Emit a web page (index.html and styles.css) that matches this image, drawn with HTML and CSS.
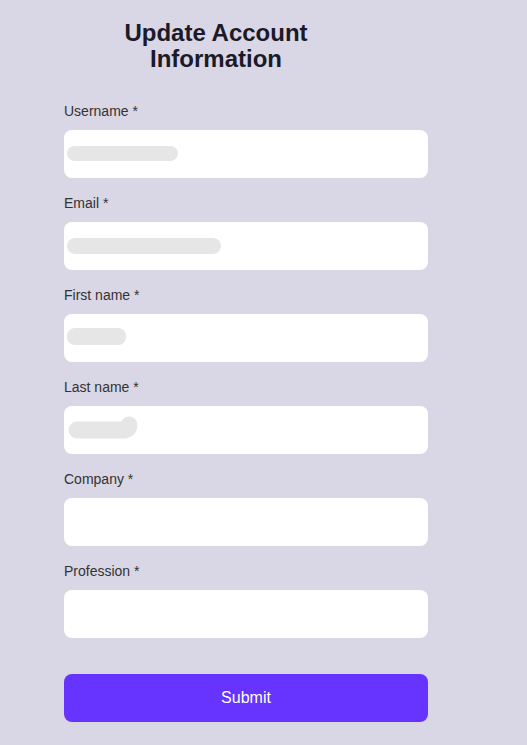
FILE: index.html
```html
<!DOCTYPE html>
<html>
<head>
<meta charset="utf-8">
<link rel="stylesheet" href="styles.css">
</head>
<body>
<div class="page">
  <h1 class="title">Update Account Information</h1>
  <form class="form">
    <div class="field">
      <label class="label">Username *</label>
      <div class="input"><span class="blob blob-user"></span></div>
    </div>
    <div class="field">
      <label class="label">Email *</label>
      <div class="input"><span class="blob blob-email"></span></div>
    </div>
    <div class="field">
      <label class="label">First name *</label>
      <div class="input"><span class="blob blob-first"></span></div>
    </div>
    <div class="field">
      <label class="label">Last name *</label>
      <div class="input">
        <svg class="scribble" width="80" height="30" viewBox="0 0 80 30">
          <path d="M13 17 L58 17 Q65 17 65 12" fill="none" stroke="#e6e6e6" stroke-width="17" stroke-linecap="round" stroke-linejoin="round"/>
        </svg>
      </div>
    </div>
    <div class="field">
      <label class="label">Company *</label>
      <div class="input"></div>
    </div>
    <div class="field">
      <label class="label">Profession *</label>
      <div class="input"></div>
    </div>
    <button type="button" class="submit">Submit</button>
  </form>
</div>
</body>
</html>
```

FILE: styles.css
```css
html, body {
  margin: 0;
  padding: 0;
  background: #d9d6e5;
}
body {
  font-family: "Liberation Sans", Arial, Helvetica, sans-serif;
  min-height: 745px;
}
.page {
  width: 527px;
  padding-top: 20px;
}
.title {
  width: 432px;
  margin: 0;
  padding: 0 108px;
  box-sizing: border-box;
  text-align: center;
  font-size: 24px;
  line-height: 26px;
  font-weight: bold;
  color: #1b1a28;
}
.form {
  margin: 31px 0 0 64px;
  width: 364px;
  display: flex;
  flex-direction: column;
}
.field {
  display: flex;
  flex-direction: column;
  margin-bottom: 17px;
}
.label {
  font-size: 14px;
  line-height: 16px;
  color: #333333;
  margin-bottom: 11px;
}
.input {
  height: 48px;
  background: #ffffff;
  border-radius: 8px;
  display: flex;
  align-items: center;
  padding-left: 3px;
}
.blob {
  display: block;
  background: #e6e6e6;
  border-radius: 8px;
  filter: blur(0.6px);
}
.blob-user {
  width: 111px;
  height: 15px;
  margin-top: -2px;
}
.blob-email {
  width: 154px;
  height: 16px;
  margin-top: 0;
}
.blob-first {
  width: 59px;
  height: 17px;
  margin-top: -4px;
}
.scribble {
  display: block;
  margin-top: -4px;
  margin-left: -3px;
  filter: blur(0.4px);
}
.submit {
  margin-top: 19px;
  height: 48px;
  border: none;
  border-radius: 8px;
  background: #6633ff;
  color: #ffffff;
  font-family: "Liberation Sans", Arial, Helvetica, sans-serif;
  font-size: 16px;
  cursor: pointer;
}
```
